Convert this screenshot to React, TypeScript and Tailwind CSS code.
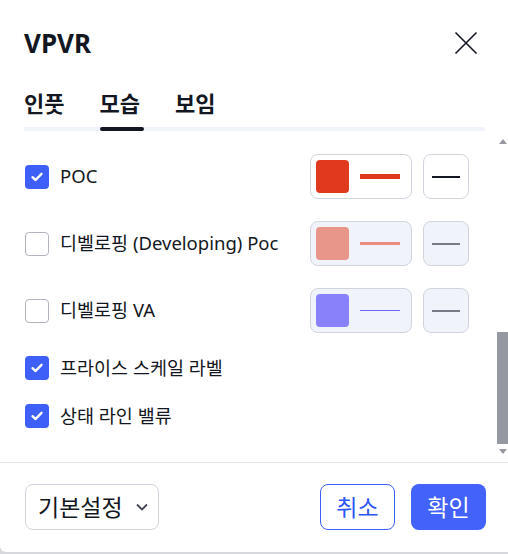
import React from "react";

const FONT = '"Noto Sans", "Noto Sans CJK KR", sans-serif';

function Check({ checked }: { checked: boolean }) {
  if (checked) {
    return (
      <div className="w-6 h-6 rounded-[4px] bg-[#3f5ff9] flex items-center justify-center shrink-0">
        <svg width="14" height="14" viewBox="0 0 14 14" fill="none">
          <path d="M2.5 7.2 L5.6 10 L11.5 3.8" stroke="#fff" strokeWidth="2.4" strokeLinecap="round" strokeLinejoin="round" />
        </svg>
      </div>
    );
  }
  return <div className="w-6 h-6 rounded-[4px] border border-[#b2b5be] bg-white shrink-0" />;
}

function ColorRow({
  label,
  checked,
  swatch,
  lineColor,
  lineH,
  styleLine,
}: {
  label: string;
  checked: boolean;
  swatch: string;
  lineColor: string;
  lineH: string;
  styleLine: string;
}) {
  const bg = checked ? "bg-white" : "bg-[#f0f3fa]";
  return (
    <div className="h-[45px] flex items-center justify-between pl-[25px] pr-[28px]">
      <div className="flex items-center gap-[11px]">
        <Check checked={checked} />
        <span className="text-[18.5px] text-[#131722] leading-none">{label}</span>
      </div>
      <div className="flex items-center gap-[11px]">
        <div className={`w-[102px] h-[45px] rounded-[8px] border border-[#d1d4dc] ${bg} flex items-center pl-[5px]`}>
          <div className="w-[33px] h-[33px] rounded-[4px]" style={{ background: swatch }} />
          <div className={`ml-[11px] w-[40px] ${lineH}`} style={{ background: lineColor }} />
        </div>
        <div className={`w-[46px] h-[45px] rounded-[8px] border border-[#d1d4dc] ${bg} flex items-center justify-center`}>
          <div className="w-[28px] h-[2px]" style={{ background: styleLine }} />
        </div>
      </div>
    </div>
  );
}

function CheckRow({ label }: { label: string }) {
  return (
    <div className="h-[26px] flex items-center gap-[11px] pl-[25px]">
      <Check checked={true} />
      <span className="text-[18.5px] text-[#131722] leading-none">{label}</span>
    </div>
  );
}

export default function App() {
  return (
    <div className="w-[508px] h-[554px] bg-[#d6d8de] overflow-hidden" style={{ fontFamily: FONT }}>
      <div className="h-[552px] bg-white rounded-bl-[6px] flex flex-col">
        {/* header */}
        <div className="h-[86px] shrink-0 flex items-center justify-between pl-6 pr-[30px]">
          <span className="text-[26px] font-bold text-[#131722] leading-none">VPVR</span>
          <svg width="24" height="24" viewBox="0 0 24 24" fill="none">
            <path d="M1.5 1.5 L22.5 22.5 M22.5 1.5 L1.5 22.5" stroke="#131722" strokeWidth="1.6" />
          </svg>
        </div>
        {/* tabs */}
        <div className="shrink-0 ml-6 mr-[23px]">
          <div className="flex gap-[35px] h-[34px] items-center">
            <span className="text-[22px] font-bold text-[#131722] leading-none">인풋</span>
            <span className="text-[22px] font-bold text-[#131722] leading-none">모습</span>
            <span className="text-[22px] font-bold text-[#131722] leading-none">보임</span>
          </div>
          <div className="mt-[7px] h-[4px] rounded-full bg-[#f0f3fa] relative">
            <div className="absolute left-[76px] top-0 w-[44px] h-[4px] rounded-full bg-[#131722]" />
          </div>
        </div>
        {/* scroll area */}
        <div className="mt-[2px] h-[329px] shrink-0 flex">
          <div className="flex-1 flex flex-col gap-[22px] pt-[21px]">
            <ColorRow label="POC" checked={true} swatch="#e03a1e" lineColor="#e03a1e" lineH="h-[5px]" styleLine="#131722" />
            <ColorRow label="디벨로핑 (Developing) Poc" checked={false} swatch="#e8968a" lineColor="#ea8c7e" lineH="h-[3px]" styleLine="#787b86" />
            <ColorRow label="디벨로핑 VA" checked={false} swatch="#8881f9" lineColor="#6c64f2" lineH="h-[1px]" styleLine="#787b86" />
            <CheckRow label="프라이스 스케일 라벨" />
            <CheckRow label="상태 라인 밸류" />
          </div>
          <div className="w-[11px] flex flex-col items-center">
            <svg width="8" height="5" viewBox="0 0 8 5" className="mt-[6px]">
              <path d="M0 5 L4 0 L8 5 Z" fill="#9598a1" />
            </svg>
            <div className="mt-[188px] w-[11px] h-[112px] bg-[#9598a1]" />
            <svg width="8" height="5" viewBox="0 0 8 5" className="mt-[5px]">
              <path d="M0 0 L4 5 L8 0 Z" fill="#9598a1" />
            </svg>
          </div>
        </div>
        {/* footer */}
        <div className="border-t border-[#e0e3eb] flex-1 flex items-start justify-between pl-[25px] pr-[22px] pt-[21px]">
          <div className="w-[134px] h-[46px] rounded-[8px] border border-[#d1d4dc] flex items-center justify-between pl-[12px] pr-[10px]">
            <span className="text-[23px] text-[#131722] leading-none">기본설정</span>
            <svg width="12" height="8" viewBox="0 0 12 8" fill="none">
              <path d="M1 1.5 L6 6.5 L11 1.5" stroke="#434651" strokeWidth="1.8" />
            </svg>
          </div>
          <div className="flex gap-[16px]">
            <div className="w-[75px] h-[46px] rounded-[8px] border border-[#3f5ff9] bg-white flex items-center justify-center">
              <span className="text-[23px] text-[#2e55f5] leading-none">취소</span>
            </div>
            <div className="w-[75px] h-[46px] rounded-[8px] bg-[#4262fa] flex items-center justify-center">
              <span className="text-[23px] text-white leading-none">확인</span>
            </div>
          </div>
        </div>
      </div>
    </div>
  );
}
